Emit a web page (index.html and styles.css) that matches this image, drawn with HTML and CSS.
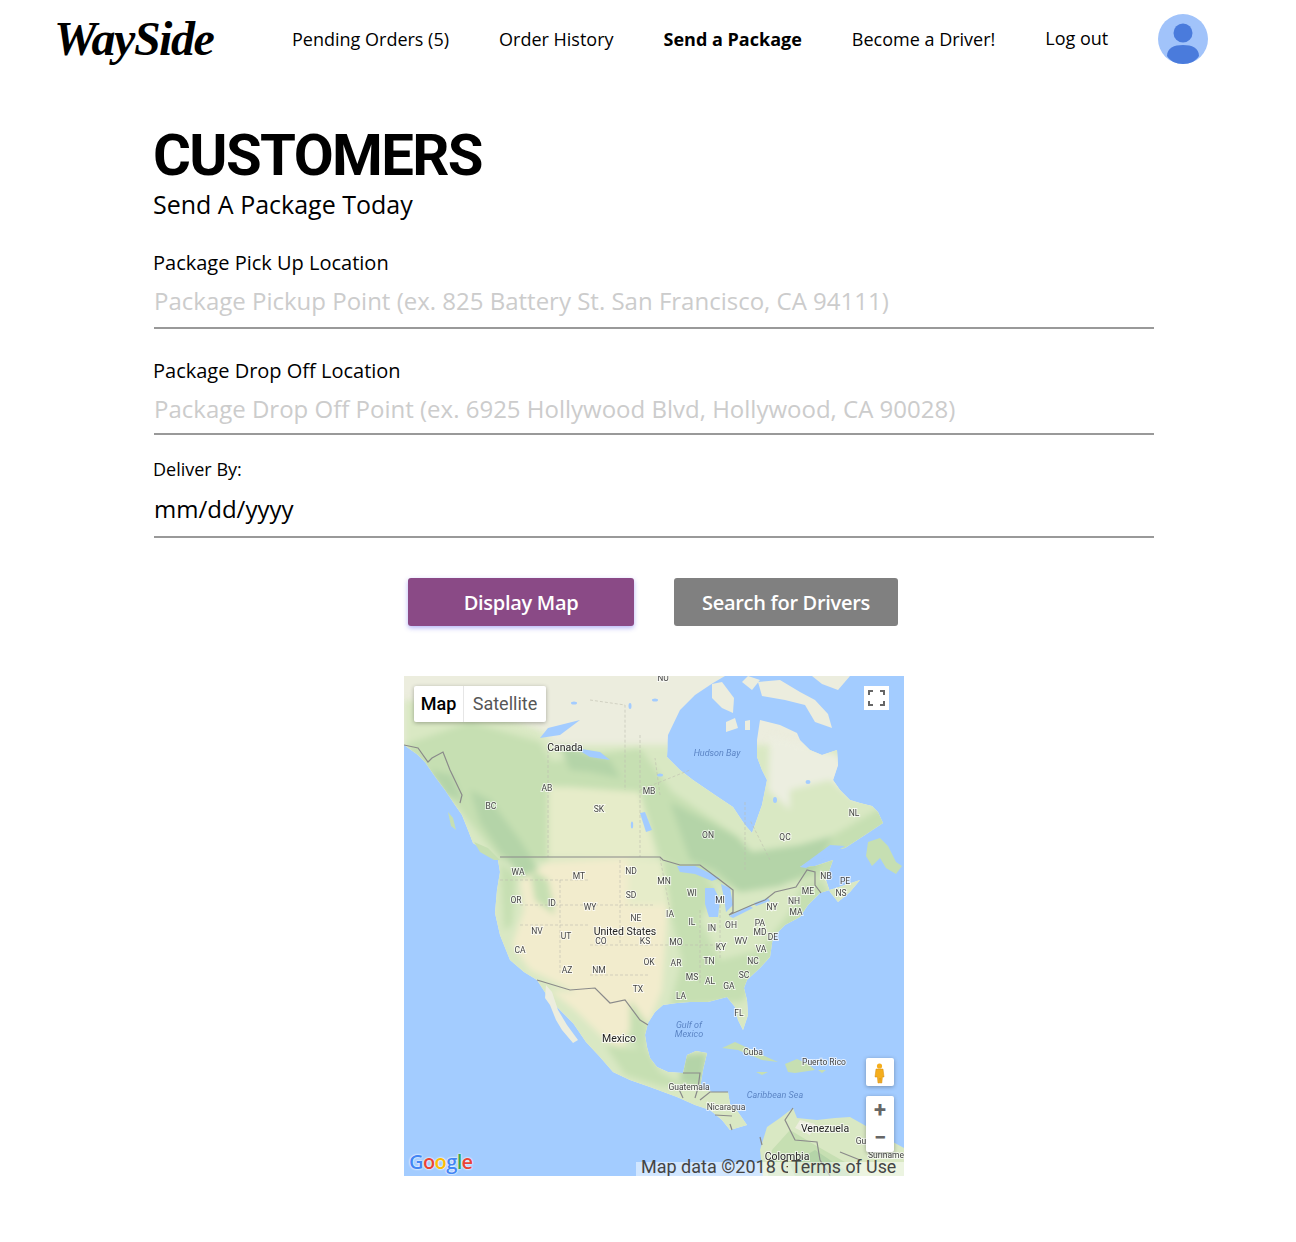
FILE: index.html
```html
<!DOCTYPE html>
<html lang="en">
<head>
  <meta charset="UTF-8">
  <title>WaySide - Send a Package</title>
  <link rel="stylesheet" href="styles.css">
</head>
<body>
  <header class="topbar">
    <a class="logo" href="#">WaySide</a>
    <nav class="nav">
      <a href="#">Pending Orders (5)</a>
      <a href="#">Order History</a>
      <a class="active" href="#">Send a Package</a>
      <a href="#">Become a Driver!</a>
      <a class="logout" href="#">Log out</a>
    </nav>
    <svg class="avatar" viewBox="0 0 50 50">
      <circle cx="25" cy="25" r="25" fill="#a1c3fa"/>
      <ellipse cx="25" cy="19" rx="9.5" ry="9.5" fill="#4a7bdc"/>
      <path d="M9 42c0-8 7-11 16-11s16 3 16 11c-3 5-9 8-16 8s-13-3-16-8z" fill="#4a7bdc"/>
    </svg>
  </header>

  <main class="content">
    <h1 class="title">CUSTOMERS</h1>
    <p class="subtitle">Send A Package Today</p>

    <form class="package-form">
      <div class="field pickup">
        <label for="pickup">Package Pick Up Location</label>
        <input id="pickup" type="text" placeholder="Package Pickup Point (ex. 825 Battery St. San Francisco, CA 94111)">
      </div>
      <div class="field dropoff">
        <label for="dropoff">Package Drop Off Location</label>
        <input id="dropoff" type="text" placeholder="Package Drop Off Point (ex. 6925 Hollywood Blvd, Hollywood, CA 90028)">
      </div>
      <div class="field deliver">
        <label for="deliver">Deliver By:</label>
        <input id="deliver" class="date" type="text" value="mm/dd/yyyy">
      </div>
      <div class="buttons">
        <button type="button" class="btn btn-map">Display Map</button>
        <button type="button" class="btn btn-search">Search for Drivers</button>
      </div>
    </form>

    <div class="map">
      <svg class="map-art" viewBox="404 676 500 500">
        <defs>
          <clipPath id="land-clip">
            <path d="M404 745L418 755L425 762L436 778L445 790L455 805L462 815L468 830L473 843L486 852L498 860L500 872L497 890L495 913L500 935L510 960L524 972L537 980L550 1000L573 1023L586 1042L600 1057L613 1072L630 1080L650 1087L677 1097L695 1105L710 1110L722 1120L730 1130L747 1125L738 1112L730 1104L728 1092L712 1092L700 1088L703 1070L707 1053L696 1051L687 1055L683 1073L668 1072L657 1067L650 1058L647 1047L645 1035L648 1023L655 1012L663 1005L677 1003L690 1002L708 1002L727 997L735 1007L738 1020L743 1030L748 1015L747 1000L744 988L747 980L760 968L770 957L773 937L785 925L800 917L808 905L820 893L836 888L860 880L850 892L838 902L830 892L826 880L833 860L815 866L800 867L825 852L845 848L865 835L883 823L878 812L872 806L860 803L850 800L840 790L833 780L838 765L837 750L822 755L810 750L800 740L797 733L780 725L760 720L757 740L757 757L762 770L767 780L762 805L752 833L745 825L733 807L715 795L693 780L680 770L667 757L668 735L680 710L695 695L713 683L725 676L404 676Z"/>
          </clipPath>
        </defs>
        <rect x="404" y="676" width="500" height="500" fill="#a3ccff"/>

        <g class="art">
          <path class="land" d="M404 745L418 755L425 762L436 778L445 790L455 805L462 815L468 830L473 843L486 852L498 860L500 872L497 890L495 913L500 935L510 960L524 972L537 980L550 1000L573 1023L586 1042L600 1057L613 1072L630 1080L650 1087L677 1097L695 1105L710 1110L722 1120L730 1130L747 1125L738 1112L730 1104L728 1092L712 1092L700 1088L703 1070L707 1053L696 1051L687 1055L683 1073L668 1072L657 1067L650 1058L647 1047L645 1035L648 1023L655 1012L663 1005L677 1003L690 1002L708 1002L727 997L735 1007L738 1020L743 1030L748 1015L747 1000L744 988L747 980L760 968L770 957L773 937L785 925L800 917L808 905L820 893L836 888L860 880L850 892L838 902L830 892L826 880L833 860L815 866L800 867L825 852L845 848L865 835L883 823L878 812L872 806L860 803L850 800L840 790L833 780L838 765L837 750L822 755L810 750L800 740L797 733L780 725L760 720L757 740L757 757L762 770L767 780L762 805L752 833L745 825L733 807L715 795L693 780L680 770L667 757L668 735L680 710L695 695L713 683L725 676L404 676Z"/>

          <g clip-path="url(#land-clip)">
            <g class="soft">
              <rect class="green-light" x="404" y="745" width="500" height="431"/>
              <path class="green-light" d="M404 700L470 705L540 730L560 750L500 760L404 750Z"/>
              <path class="green-mid" d="M404 745L470 722L540 742L565 785L548 860L500 860L460 810Z"/>
              <path class="green-mid" d="M548 762L640 748L672 792L740 838L760 868L800 855L880 808L900 840L860 870L800 880L740 892L690 868L660 858L640 792L562 786Z"/>
              <path class="pale" d="M770 735L838 755L860 800L820 800L790 810L768 790Z"/>
              <path class="green-light" d="M790 790L830 780L870 812L820 830L790 815Z"/>
              <path class="green-dark" d="M670 802L735 836L752 852L800 845L832 836L815 870L780 886L740 892L715 870L690 860Z"/>
              <path class="green-dark" d="M470 790L490 800L520 840L545 880L550 905L530 885L500 852L480 822Z"/>
              <path class="green-dark" d="M560 745L610 760L620 778L590 772L570 770Z"/>
              <path class="green-dark" d="M430 770L452 775L462 800L445 795Z"/>
              <path class="tan-light" d="M548 786L640 792L656 857L548 857Z"/>
              <path class="tan" d="M520 880L548 862L628 858L668 905L662 990L648 1025L622 1035L592 1000L560 985L530 970L512 945L524 910Z"/>
              <path class="tan-light" d="M628 858L668 862L670 905L628 905Z"/>
              <path class="green-mid" d="M662 860L700 870L716 890L700 920L720 960L760 950L790 912L802 885L822 880L832 898L772 960L742 1002L670 1006L682 960L672 920Z"/>
              <path class="green-mid" d="M500 862L516 876L512 925L504 930Z"/>
              <path class="green-mid" d="M530 868L548 880L555 915L535 900Z"/>
              <path class="tan" d="M550 990L595 995L625 1030L625 1052L605 1040L575 1010Z"/>
              <path class="green-mid" d="M605 1045L648 1050L660 1072L690 1088L660 1086L625 1075Z"/>
              <path class="green-mid" d="M630 1000L648 1025L645 1055L630 1040Z"/>
              <path class="green-dark" d="M682 1055L707 1053L702 1088L680 1082Z"/>
            </g>
          </g>

          <!-- arctic islands -->
          <path class="land" d="M712 684L722 682L734 698L733 713L722 708L712 698Z"/>
          <path class="land" d="M748 676L760 680L752 690L742 682Z"/>
          <path class="land" d="M758 682L780 680L800 692L815 700L828 714L832 728L815 722L805 705L785 700L762 696Z"/>
          <path class="land" d="M812 676L850 676L838 690L822 684Z"/>
          <path class="land" d="M726 722L735 718L738 728L726 732Z"/>
          <path class="land" d="M745 721L750 720L750 730L745 730Z"/>

          <!-- newfoundland, vancouver island, haida gwaii -->
          <path class="green-mid" d="M868 842L880 838L888 846L896 862L902 866L896 874L886 868L880 858L872 866L866 856Z"/>
          <path class="green-mid" d="M474 842L488 848L500 860L494 860L480 852Z"/>
          <path class="green-mid" d="M448 812L453 818L456 830L451 826Z"/>

          <!-- baja -->
          <path class="land" d="M546 985L552 992L558 1010L567 1025L578 1040L573 1043L562 1030L556 1020L550 1005L545 998Z"/>

          <!-- caribbean -->
          <path class="green-mid" d="M722 1048L735 1042L748 1048L760 1054L778 1062L762 1060L738 1050Z"/>
          <path class="green-mid" d="M785 1064L797 1059L808 1064L815 1070L795 1073L788 1072Z"/>
          <path class="green-mid" d="M756 1072L768 1072L762 1075Z"/>
          <path class="green-mid" d="M818 1070L826 1070L822 1073Z"/>

          <!-- south america -->
          <path class="green-light" d="M763 1176L760 1150L767 1127L780 1118L793 1108L797 1118L817 1120L835 1118L850 1117L866 1126L880 1135L904 1148L904 1176Z"/>
          <path class="land" d="M800 1120L815 1124L810 1135L795 1128Z"/>
          <path class="green-mid" d="M768 1176L772 1150L790 1130L815 1145L850 1165L860 1176Z"/>
          <path class="green-dark" d="M790 1165L815 1150L845 1170L850 1176L795 1176Z"/>

          <!-- lakes -->
          <path class="lake" d="M677 866L695 866L720 878L712 881L695 874L680 872Z"/>
          <path class="lake" d="M705 888L714 888L720 900L718 917L709 917L705 904Z"/>
          <path class="lake" d="M721 884L730 888L733 905L726 912L724 898Z"/>
          <path class="lake" d="M729 916L750 906L753 908L733 918Z"/>
          <path class="lake" d="M754 903L768 898L770 901L756 906Z"/>
          <path class="lake" d="M640 813L645 812L652 830L646 832Z"/>
          <path class="lake" d="M540 738L548 728L580 720L560 735Z"/>
          <path class="lake" d="M575 748L600 752L610 760L590 757Z"/>
          <path class="lake" d="M800 867L830 845L845 846L825 858L806 868Z"/>
          <ellipse class="lake" cx="574" cy="703" rx="3" ry="1.500"/>
          <ellipse class="lake" cx="630" cy="706" rx="1.500" ry="3"/>
          <ellipse class="lake" cx="655" cy="700" rx="3" ry="1.500"/>
          <ellipse class="lake" cx="632" cy="825" rx="1.200" ry="3.500"/>
          <ellipse class="lake" cx="775" cy="800" rx="2" ry="3"/>
          <ellipse class="lake" cx="808" cy="782" rx="2.500" ry="2"/>
          <ellipse class="lake" cx="660" cy="775" rx="3" ry="1.500"/>
        </g>

        <!-- state and province lines -->
        <path class="state" d="M548 745L548 857M640 735L640 857M590 700L625 705L625 790M500 880L590 880M520 905L655 905M520 925L590 925M560 880L560 975M620 860L620 945M590 945L680 945M590 975L650 975M660 858L670 910M670 945L720 945M700 910L700 985M720 905L720 960M770 860L750 820M745 870L745 800M660 795L655 758M640 790L690 770"/>
        <!-- country lines -->
        <path class="border" d="M404 745L418 748L428 762L432 758L443 752L450 770L462 795L460 803"/>
        <path class="border" d="M500 857L660 857L663 860L680 865L700 865L720 880L733 890L733 912L729 915L752 905L765 900L775 892L796 887L807 870L815 872L815 885L821 893"/>
        <path class="border" d="M537 980L570 990L595 988L610 1003L625 1000L640 1020L648 1025"/>
        <path class="border" d="M683 1073L700 1073L698 1088L695 1098M678 1087L683 1098M700 1100L710 1092L728 1092M715 1115L732 1116M730 1124L732 1130M760 1137L762 1145M793 1108L785 1120L795 1140L817 1142L820 1160L830 1176M840 1152L860 1160"/>

        <g class="labels">
          <text x="663" y="681">NU</text>
          <text x="565" y="751" class="country">Canada</text>
          <text x="717" y="756" class="water">Hudson Bay</text>
          <text x="547" y="791">AB</text>
          <text x="649" y="794">MB</text>
          <text x="491" y="809">BC</text>
          <text x="599" y="812">SK</text>
          <text x="708" y="838">ON</text>
          <text x="785" y="840">QC</text>
          <text x="854" y="816">NL</text>
          <text x="518" y="875">WA</text>
          <text x="579" y="879">MT</text>
          <text x="631" y="874">ND</text>
          <text x="664" y="884">MN</text>
          <text x="692" y="896">WI</text>
          <text x="720" y="903">MI</text>
          <text x="516" y="903">OR</text>
          <text x="552" y="906">ID</text>
          <text x="590" y="910">WY</text>
          <text x="631" y="898">SD</text>
          <text x="636" y="921">NE</text>
          <text x="670" y="917">IA</text>
          <text x="692" y="925">IL</text>
          <text x="712" y="931">IN</text>
          <text x="731" y="928">OH</text>
          <text x="772" y="910">NY</text>
          <text x="794" y="904">NH</text>
          <text x="796" y="915">MA</text>
          <text x="808" y="894">ME</text>
          <text x="826" y="879">NB</text>
          <text x="845" y="884">PE</text>
          <text x="841" y="896">NS</text>
          <text x="760" y="926">PA</text>
          <text x="760" y="935">MD</text>
          <text x="773" y="940">DE</text>
          <text x="537" y="934">NV</text>
          <text x="566" y="939">UT</text>
          <text x="625" y="935" class="country">United States</text>
          <text x="601" y="944">CO</text>
          <text x="645" y="944">KS</text>
          <text x="676" y="945">MO</text>
          <text x="721" y="950">KY</text>
          <text x="741" y="944">WV</text>
          <text x="761" y="952">VA</text>
          <text x="520" y="953">CA</text>
          <text x="649" y="965">OK</text>
          <text x="676" y="966">AR</text>
          <text x="709" y="964">TN</text>
          <text x="753" y="964">NC</text>
          <text x="744" y="978">SC</text>
          <text x="567" y="973">AZ</text>
          <text x="599" y="973">NM</text>
          <text x="638" y="992">TX</text>
          <text x="692" y="980">MS</text>
          <text x="710" y="984">AL</text>
          <text x="729" y="989">GA</text>
          <text x="681" y="999">LA</text>
          <text x="739" y="1016">FL</text>
          <text x="689" y="1028" class="water">Gulf of</text>
          <text x="689" y="1037" class="water">Mexico</text>
          <text x="619" y="1042" class="country">Mexico</text>
          <text x="753" y="1055">Cuba</text>
          <text x="824" y="1065">Puerto Rico</text>
          <text x="689" y="1090">Guatemala</text>
          <text x="775" y="1098" class="water">Caribbean Sea</text>
          <text x="726" y="1110">Nicaragua</text>
          <text x="825" y="1132" class="country">Venezuela</text>
          <text x="787" y="1160" class="country">Colombia</text>
          <text x="886" y="1158">Suriname</text>
          <text x="861" y="1144">Gu</text>
        </g>
      </svg>

      <div class="map-type">
        <span class="map-type-on">Map</span>
        <span class="map-type-off">Satellite</span>
      </div>

      <div class="map-fullscreen">
        <svg viewBox="0 0 25 24" width="25" height="24">
          <path d="M5 9V5h4M16 5h4v4M20 15v4h-4M9 19H5v-4" fill="none" stroke="#666" stroke-width="2"/>
        </svg>
      </div>

      <div class="map-pegman">
        <svg viewBox="0 0 28 28" width="28" height="28">
          <circle cx="13.500" cy="8" r="2.600" fill="#f5ae1d"/>
          <path d="M10 11h7l1 8h-1.600l-.6 6h-1.600l-.2-5-.4 5h-1.600l-.6-6H9z" fill="#f5ae1d" stroke="#d58a0c" stroke-width=".5"/>
        </svg>
      </div>

      <div class="map-zoom">
        <span class="zoom-btn">+</span>
        <span class="zoom-btn">&minus;</span>
      </div>

      <div class="google-logo"><span class="g-blue">G</span><span class="g-red">o</span><span class="g-yellow">o</span><span class="g-blue">g</span><span class="g-green">l</span><span class="g-red">e</span></div>

      <div class="attribution">
        <span class="map-data">Map data &copy;2018 G</span>
        <span class="terms">Terms of Use</span>
      </div>
    </div>
  </main>
</body>
</html>
```

FILE: styles.css
```css
/* Global styling */
* {
  margin: 0;
  padding: 0;
  box-sizing: border-box;
}

body {
  background: #fff;
  color: #000;
  font-family: 'Open Sans', sans-serif;
}

a {
  color: #000;
  text-decoration: none;
}

/* Top bar */
.topbar {
  display: flex;
  align-items: center;
  height: 78px;
  padding-left: 54px;
}

.logo {
  width: 238px;
  font-family: 'Liberation Serif', serif;
  font-size: 48px;
  font-style: italic;
  font-weight: 700;
  letter-spacing: -1.500px;
  line-height: 1;
}

.nav {
  display: flex;
  align-items: center;
  gap: 50px;
  font-size: 18px;
}

.nav a.active {
  font-weight: 700;
}

.nav a.logout {
  margin-top: -3px;
}

.avatar {
  width: 50px;
  height: 50px;
  margin-left: 50px;
  margin-top: -1px;
}

/* Main column */
.content {
  width: 1000px;
  margin-left: 154px;
}

.title {
  margin-top: 45px;
  margin-left: -1px;
  font-family: 'Roboto', sans-serif;
  font-size: 58px;
  font-weight: 700;
  letter-spacing: -1.600px;
  line-height: 64px;
}

.subtitle {
  font-size: 25px;
  line-height: 34px;
  margin-left: -1px;
}

.field label {
  display: block;
  margin-left: -1px;
  font-size: 20px;
  line-height: 27px;
}

.field input {
  display: block;
  width: 100%;
  border: 0;
  border-bottom: 2px solid #999;
  outline: none;
  background: transparent;
  font-family: 'Open Sans', sans-serif;
  font-size: 24px;
  color: #000;
}

.field input::placeholder {
  color: #ccc;
  opacity: 1;
}

.pickup {
  margin-top: 28px;
}

.pickup input {
  height: 53px;
  padding-bottom: 2px;
}

.dropoff {
  margin-top: 28px;
}

.dropoff input {
  height: 51px;
}

.deliver {
  margin-top: 21px;
}

.deliver label {
  font-size: 18px;
  line-height: 27px;
}

.deliver input {
  height: 55px;
  padding-bottom: 2px;
}

.buttons {
  display: flex;
  justify-content: center;
  gap: 40px;
  margin-top: 40px;
  padding-right: 2px;
}

.btn {
  height: 48px;
  border: none;
  border-radius: 3px;
  color: #fff;
  font-family: 'Open Sans', sans-serif;
  font-size: 20px;
  font-weight: 600;
  letter-spacing: -0.300px;
  cursor: pointer;
}

.btn-map {
  width: 226px;
  background-color: #8a4a86;
  box-shadow: 0 2px 5px rgba(90, 90, 240, 0.45);
}

.btn-search {
  width: 224px;
  background-color: #808080;
}

/* Map */
.map {
  position: relative;
  width: 500px;
  height: 500px;
  margin: 50px 0 66px 250px;
  overflow: hidden;
  font-family: 'Roboto', sans-serif;
}

.map-art {
  display: block;
  width: 500px;
  height: 500px;
}

.art {
  filter: blur(0.6px);
}

.soft {
  filter: blur(3px);
}

.land { fill: #ecedde; }
.green-light { fill: #d9e8c3; }
.green-mid { fill: #c6dfb2; }
.green-dark { fill: #b4d4a8; }
.tan { fill: #f2eccd; }
.tan-light { fill: #e6ecc9; }
.pale { fill: #eceee0; }
.lake { fill: #a3ccff; }

.state {
  fill: none;
  stroke: #bdbdae;
  stroke-width: 0.6;
  stroke-dasharray: 3 2;
}

.border {
  fill: none;
  stroke: #8a8a8a;
  stroke-width: 1.200;
}

.labels {
  opacity: 0.99;
}

.labels text {
  font-size: 8.500px;
  fill: #444;
  text-anchor: middle;
  paint-order: stroke;
  stroke: rgba(255, 255, 255, 0.7);
  stroke-width: 2px;
}

.labels .country {
  font-size: 10.500px;
  fill: #222;
}

.labels .water {
  font-size: 9px;
  font-style: italic;
  fill: #5b84c4;
  stroke: none;
}

.map-type {
  position: absolute;
  top: 10px;
  left: 10px;
  display: flex;
  height: 36px;
  background: #fff;
  border-radius: 2px;
  box-shadow: 0 1px 4px rgba(0, 0, 0, 0.3);
  font-size: 18px;
  line-height: 36px;
}

.map-type-on {
  width: 50px;
  font-weight: 500;
  text-align: center;
  border-right: 1px solid #e6e6e6;
}

.map-type-off {
  width: 82px;
  color: #565656;
  text-align: center;
}

.map-fullscreen {
  position: absolute;
  top: 10px;
  left: 460px;
  width: 25px;
  height: 24px;
  background: #fff;
}

.map-fullscreen svg,
.map-pegman svg {
  display: block;
}

.map-pegman {
  position: absolute;
  top: 382px;
  left: 462px;
  width: 28px;
  height: 28px;
  background: #fff;
  border-radius: 2px;
  box-shadow: 0 1px 4px rgba(0, 0, 0, 0.3);
}

.map-zoom {
  position: absolute;
  top: 420px;
  left: 462px;
  width: 28px;
  height: 56px;
  background: #fff;
  border-radius: 2px;
  box-shadow: 0 1px 4px rgba(0, 0, 0, 0.3);
}

.zoom-btn {
  display: block;
  height: 28px;
  color: #666;
  font-size: 22px;
  font-weight: 700;
  line-height: 28px;
  text-align: center;
}

.google-logo {
  position: absolute;
  left: 5px;
  bottom: 1px;
  font-family: 'Open Sans', sans-serif;
  font-size: 20px;
  font-weight: 600;
  letter-spacing: -0.600px;
  line-height: 26px;
  text-shadow: 0 0 2px #fff, 0 0 2px #fff;
}

.g-blue { color: #4285f4; }
.g-red { color: #ea4335; }
.g-yellow { color: #fbbc05; }
.g-green { color: #34a853; }

.attribution {
  position: absolute;
  right: 0;
  bottom: 0;
  width: 268px;
  height: 14px;
  background: rgba(255, 255, 255, 0.5);
  color: #444;
  font-size: 18px;
  line-height: 18px;
  white-space: nowrap;
}

.map-data {
  position: absolute;
  left: 5px;
  top: -4px;
  width: 147px;
  overflow: hidden;
}

.terms {
  position: absolute;
  left: 155px;
  top: -4px;
  font-size: 17.800px;
}
```
